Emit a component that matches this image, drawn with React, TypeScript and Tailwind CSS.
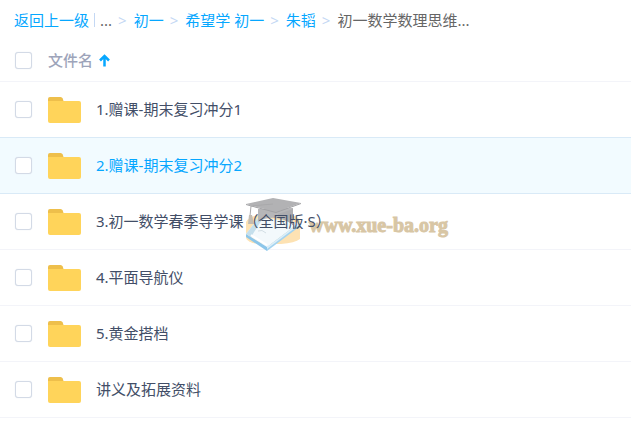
import { useState } from 'react';

const crumbs = ['初一', '希望学 初一', '朱韬'];

const files = [
  '1.赠课-期末复习冲分1',
  '2.赠课-期末复习冲分2',
  '3.初一数学春季导学课（全国版·S）',
  '4.平面导航仪',
  '5.黄金搭档',
  '讲义及拓展资料',
];

const checkboxClass =
  'block size-[17px] appearance-none rounded-[3px] border border-[#d3dae6] bg-white shadow-[0_0_1px_#d3dae6] checked:border-[#06a7ff] checked:bg-[#06a7ff]';

function FolderIcon() {
  return (
    <svg width="33" height="28" viewBox="0 -2 33 28" className="shrink-0" aria-hidden="true">
      <path d="M0 8V2Q0 0 2 0H12.500Q14.200 0 14.700 1.500L15.500 4V8Z" fill="#eebf4b" />
      <path d="M0 4H31Q33 4 33 6V24Q33 26 31 26H2Q0 26 0 24Z" fill="#ffd45a" />
    </svg>
  );
}

function SortIcon() {
  return (
    <svg width="11" height="13" viewBox="0 0 11 13" aria-hidden="true">
      <path d="M5.500 12.500V2M1 6.500L5.500 2L10 6.500" fill="none" stroke="#06a7ff" strokeWidth="2.500" />
    </svg>
  );
}

function Watermark() {
  return (
    <div className="pointer-events-none absolute top-1 left-[197px] flex items-center gap-2">
      <svg width="56" height="54" viewBox="0 0 56 54" aria-hidden="true">
        <path d="M1 24Q4 18 14 17L42 16Q54 18 55 23V41Q50 45 36 46L12 46Q2 44 1 40Z" fill="#fde2b3" />
        <path d="M1 36L14 19L54 25L22 49Z" fill="#f3f9fc" />
        <path d="M22 49L54 25V29L22 53Z" fill="#a3d3ef" />
        <path d="M22 49L54 25V27L22 51Z" fill="#dceef8" />
        <path d="M1 36L22 49V53L1 39Z" fill="#8cc6ea" />
        <path d="M1 36L14 19L18 20L6 39Z" fill="#c5dfec" />
        <path d="M6 37L22 47" stroke="#ffffff" strokeWidth="2" />
        <path d="M13 33Q17 31 21 35" fill="none" stroke="#d3dfe5" />
        <path d="M13 11V24Q21 19 31 20Q42 21 48 27V10Z" fill="#b6b6b8" />
        <path d="M33 16L48 11V27Q42 22 33 20Z" fill="#adadb0" />
        <path d="M1 6L28 0L56 5L31 14Z" fill="#b2b2b4" />
        <path d="M1 6L31 14L56 5V6L31 15L1 7Z" fill="#a0a0a3" />
        <path d="M28 6L6 8L5 18" fill="none" stroke="#a9a9ab" />
        <path d="M4 17H7L9 26H3Z" fill="#c4bdb3" />
      </svg>
      <span className="font-['Liberation_Serif',serif] text-[20px] leading-6 font-bold text-[#d8c6a5] [-webkit-text-stroke:1px_#d8c6a5]">
        www.xue-ba.org
      </span>
    </div>
  );
}

export default function App() {
  const [selected, setSelected] = useState<string[]>([]);

  const toggle = (name: string) =>
    setSelected((prev) => (prev.includes(name) ? prev.filter((n) => n !== name) : [...prev, name]));

  return (
    <main className="min-h-screen bg-white font-['Noto_Sans','Noto_Sans_CJK_SC',sans-serif] text-[15px] leading-5 text-[#424e67]">
      <nav className="flex h-10 items-center px-3.5 whitespace-nowrap text-[#06a7ff]">
        <a href="#back">返回上一级</a>
        <span className="mx-[5px] h-3.5 w-px bg-[#c4d8f4]" />
        <span className="text-[#666]">...</span>
        {crumbs.map((crumb) => (
          <span key={crumb} className="flex">
            <span className="mr-[7px] ml-1.5 text-[#c4d8f4]">&gt;</span>
            <a href="#folder">{crumb}</a>
          </span>
        ))}
        <span className="mr-[7px] ml-1.5 text-[#c4d8f4]">&gt;</span>
        <span className="text-[#666]">初一数学数理思维...</span>
      </nav>

      <table className="w-full border-collapse text-left">
        <thead>
          <tr className="h-[41px] border-b border-[#f3f4f9]">
            <th className="w-12 pl-[15px]">
              <input
                type="checkbox"
                aria-label="全选"
                className={checkboxClass}
                checked={selected.length === files.length}
                onChange={(e) => setSelected(e.target.checked ? files : [])}
              />
            </th>
            <th className="text-[#9da4ba]">
              <button className="flex items-center gap-1.5 font-medium">
                文件名
                <SortIcon />
              </button>
            </th>
          </tr>
        </thead>
        <tbody>
          {files.map((name, i) => (
            <tr
              key={name}
              className={
                i === 1
                  ? 'h-14 border-b border-[#d9eaf7] bg-[#f2fbff] text-[#06a7ff]'
                  : i === 0
                    ? 'h-14 border-b border-b-[#d9eaf7]'
                    : 'h-14 border-b border-b-[#f3f4f9]'
              }
            >
              <td className="w-12 pl-[15px]">
                <input
                  id={`file-${i}`}
                  type="checkbox"
                  className={checkboxClass}
                  checked={selected.includes(name)}
                  onChange={() => toggle(name)}
                />
              </td>
              <td>
                <div className="relative flex h-[55px] items-center">
                  {i === 2 && <Watermark />}
                  <label htmlFor={`file-${i}`} className="relative flex items-center gap-[15px]">
                    <FolderIcon />
                    {name}
                  </label>
                </div>
              </td>
            </tr>
          ))}
        </tbody>
      </table>
    </main>
  );
}
